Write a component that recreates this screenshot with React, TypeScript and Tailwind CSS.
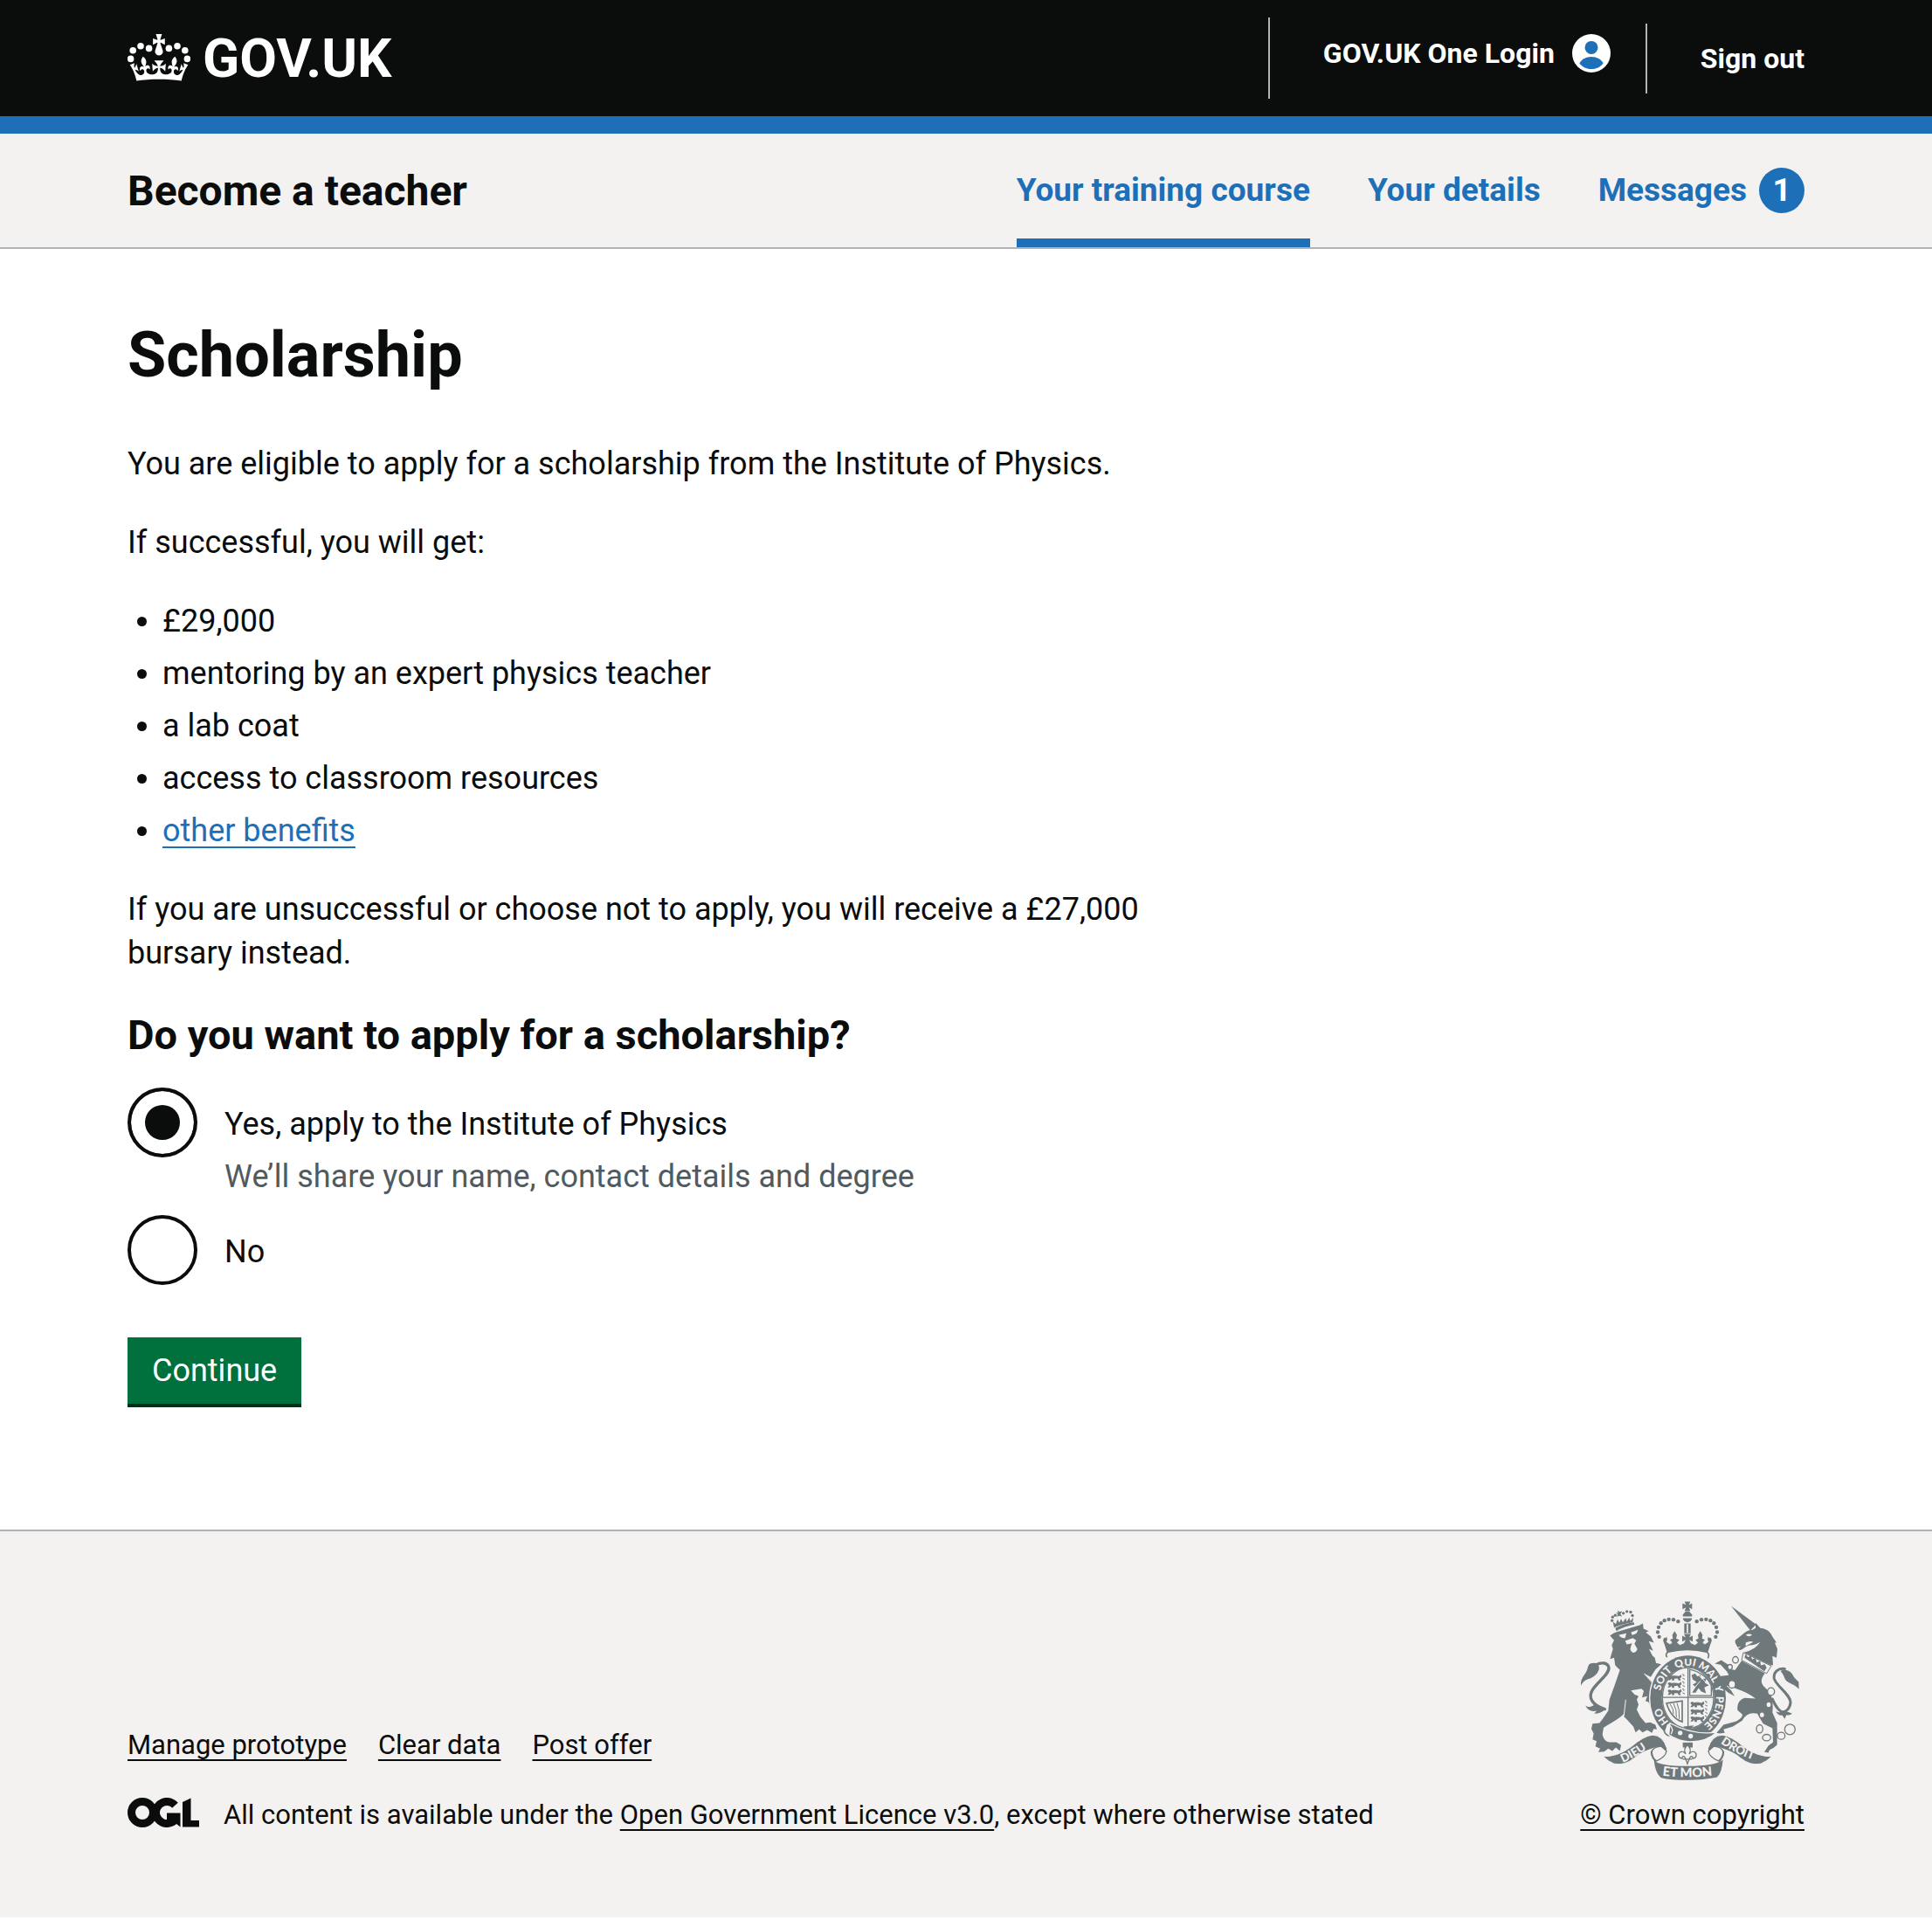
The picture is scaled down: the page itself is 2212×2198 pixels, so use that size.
import { useState, type ReactNode } from "react";

function CrownIcon() {
  const beads = [
    [1.8, 18.2],
    [3.1, 13.4],
    [7.5, 10.9],
    [12.3, 12.2],
  ];
  return (
    <svg viewBox="0 4 36 27" className="mb-0.5 h-[54px] w-[72px]" fill="currentColor" aria-hidden="true">
      {beads.map(([x, y]) => (
        <g key={x}>
          <circle cx={x} cy={y} r="1.9" />
          <circle cx={36 - x} cy={y} r="1.9" />
        </g>
      ))}
      <path
        transform="translate(1.52 4) scale(.52)"
        d="M33.1 9.8c.2-.1.3-.3.5-.5l4.6 2.4v-6.8l-4.6 1.5c-.1-.2-.3-.3-.5-.5L35 0h-6.7l1.9 5.9c-.2.1-.3.3-.5.5l-4.6-1.5v6.8l4.6-2.4c.1.2.3.3.5.5l-2.6 8c-.9 2.8 1.2 5.7 4.1 5.7 3 0 5.1-2.9 4.1-5.7z"
      />
      <path
        transform="translate(1.36 -.7) scale(.524)"
        d="M37 37.9s-3.4 3.8-4.1 6.1c2.2 0 4.2-.5 6.4-2.8l-.7 8.5c-2-2.8-4.4-4.1-5.7-3.8.1 3.1.5 6.7 5.8 7.2 3.7.3 6.7-1.5 7-3.8.4-2.6-2-4.3-3.7-1.6-1.4-4.5 2.4-6.1 4.9-3.2-1.9-4.5-1.8-7.7 2.4-10.9 3 4 2.6 7.3-1.2 11.1 2.4-1.3 6.2 0 4 4.6-1.2-2.8-3.7-2.2-4.2.2-.3 1.7.7 3.7 3 4.2 1.9.3 4.7-.9 7-5.9-1.3 0-2.4.7-3.9 1.7l2.4-8c.6 2.3 1.4 3.7 2.2 4.5.6-1.6.5-2.8 0-5.3l5 1.8c-2.6 3.6-5.2 8.7-7.3 17.5-7.4-1.1-15.7-1.7-24.5-1.7-8.8 0-17.1.6-24.5 1.7-2.1-8.9-4.7-13.9-7.3-17.5l5-1.8c-.5 2.5-.6 3.7 0 5.3.8-.8 1.6-2.3 2.2-4.5l2.4 8c-1.5-1-2.6-1.7-3.9-1.7 2.3 5 5.2 6.2 7 5.9 2.3-.4 3.3-2.4 3-4.2-.5-2.4-3-3.1-4.2-.2-2.2-4.6 1.6-6 4-4.6-3.7-3.7-4.2-7.1-1.2-11.1 4.2 3.2 4.3 6.4 2.4 10.9 2.5-2.8 6.3-1.3 4.9 3.2-1.8-2.7-4.1-1-3.7 1.6.3 2.3 3.3 4.1 7 3.8 5.4-.5 5.7-4.2 5.8-7.2-1.3-.2-3.7 1-5.7 3.8l-.7-8.5c2.2 2.3 4.2 2.7 6.4 2.8-.7-2.3-4.1-6.1-4.1-6.1z"
      />
    </svg>
  );
}

function UserIcon() {
  return (
    <svg viewBox="0 0 44 44" className="size-[44px] shrink-0" aria-hidden="true">
      <circle cx="22" cy="22" r="22" fill="#fff" />
      <circle cx="22" cy="15.4" r="7.5" fill="#1d70b8" />
      <path d="M8.4 33.4C10.6 29 15.8 26 22 26s11.4 3 13.6 7.4C32.4 37.6 27.5 40 22 40S11.6 37.6 8.4 33.4z" fill="#1d70b8" />
    </svg>
  );
}

function OglLogo() {
  return (
    <svg viewBox="0 0 82 34" className="h-[34px] w-[82px] shrink-0" fill="#0b0c0c" role="img" aria-label="Open Government Licence">
      <circle cx="17" cy="17" r="12.5" fill="none" stroke="#0b0c0c" strokeWidth="9" />
      <circle cx="45" cy="17" r="12.5" fill="none" stroke="#0b0c0c" strokeWidth="9" strokeDasharray="63.5 15.04" transform="rotate(26 45 17)" />
      <path d="M45 17.5h15.5V33.5L56 30l-5-5h-6z" />
      <path d="M63 5l9.5-4.5V26H82v7.5H63z" />
    </svg>
  );
}

function Lions({ x, y }: { x: number; y: number }) {
  return (
    <g transform={`translate(${x} ${y})`}>
      {[0, 25, 50].map((dy) => (
        <g key={dy} transform={`translate(0 ${dy})`}>
          <path d="M2 8c4-6 10-5 13-2 8-1 18-2 25 1l8-5 2 8-6 5 4 7h-8l-4-7-12 1 1 6h-8l-1-7-6 6H2l5-7z" />
          <path d="M52 2c5-3 8 2 5 6M53 14l8 4" fill="none" stroke="currentColor" strokeWidth="3" />
        </g>
      ))}
    </g>
  );
}

function RoyalArms({ className }: { className: string }) {
  const arch = [
    [380, 229],
    [359, 220],
    [354, 204],
    [357, 187],
    [365, 173],
    [377, 164],
    [392, 160],
    [408, 161],
    [424, 167],
  ];
  const bg = "#f3f2f1";
  return (
    <svg viewBox="90 98 750 614" className={`text-[#6f787b] ${className}`} fill="currentColor" role="img" aria-label="Royal coat of arms">
      <defs>
        <path id="garter" d="M458 541A97 111 0 0 1 458 319A97 111 0 0 1 458 541" />
        <path id="dieu" d="M234 652Q282 632 336 590" />
        <path id="droit" d="M570 585Q622 624 704 650" />
        <path id="mon" d="M370 696Q456 708 552 695" />
      </defs>

      {/* lion's tail */}
      <path
        d="M172 468C132 456 112 430 130 402C148 374 188 348 186 326C183 308 160 306 142 316"
        fill="none"
        stroke="currentColor"
        strokeWidth="10"
        strokeLinecap="round"
      />
      <path d="M90 388C88 366 98 356 106 344C116 330 112 318 122 312C136 306 156 310 152 332C146 352 126 362 112 366C102 370 94 378 90 388zM106 456C116 464 128 460 136 454L172 470C158 484 146 482 136 484L144 474C128 478 112 472 106 456z" />

      {/* lion */}
      <path d="M213 203L292 180L303 174L305 192L323 200L313 205L330 219L341 240L323 235L338 268L324 262L336 285L344 292L348 310L366 314L346 332L330 358L306 346L340 380L352 404L364 454L352 444L350 458L338 452L330 460L322 444L312 440L318 424L300 428L306 406L298 398L262 404L274 418L288 424L282 436L288 452L282 470L294 494L312 516L328 514L346 522L351 538L340 536L334 550L318 540L302 548L290 538L278 548L270 528L246 502L238 494L240 482C218 506 186 518 168 532L164 556C168 572 178 584 192 582L212 582L228 592L224 612L210 600L198 612L184 604L170 614L150 616L156 604L140 596L144 578L130 572L134 552L126 536L130 518L154 516L166 500L184 474L188 436L206 386L224 334L208 318L204 292L190 296L200 262L196 248L204 232L190 216L202 208z" />
      <path d="M244 436L238 490" stroke={bg} strokeWidth="3" />
      <g fill={bg}>
        <path d="M220 214L246 208L242 224Q228 226 220 214zM262 205L286 196Q284 212 266 214z" />
        <path d="M242 234L268 224L280 232L274 244L284 262Q280 276 268 274Q256 268 262 252L266 242L248 246z" />
      </g>
      <path d="M308 346L340 384" stroke={bg} strokeWidth="3" />

      {/* lion's crown */}
      <path d="M208 190Q236 174 272 170L274 178Q240 184 212 200z" />
      <path d="M204 188L200 168L210 176L216 160L222 172L228 158L234 170L244 156L248 168L256 154L260 166L270 154L268 170Q234 174 204 188zM216 128L222 134L232 132L226 142L232 150L220 148L214 152L216 142L210 136L218 138z" />
      {[[197, 164], [199, 152], [208, 146], [236, 139], [248, 133], [261, 135], [267, 147]].map(([x, y]) => (
        <circle key={x} cx={x} cy={y} r="5" />
      ))}

      {/* imperial crown */}
      {arch.map(([x, y]) => (
        <g key={x}>
          <circle cx={x} cy={y} r="6.5" />
          <circle cx={912 - x} cy={y} r="6.5" />
        </g>
      ))}
      <path d="M446 99H466L461 110L472 105V125L461 119L466 131H446L451 119L439 125V105L451 110zM450 133H462L472 144V150H440V144zM440 156H472Q470 168 456 170Q442 168 440 156zM445 174H467V208H445z" />
      <path d="M456 176V206" stroke={bg} strokeWidth="5" />
      <path d="M378 248L372 232L386 220L384 238L396 246L404 240L396 230L406 226L404 214L412 200L420 214L417 226L428 230L420 240L430 248L444 242L450 230L438 236V216L450 222L444 210H468L462 222L474 216V236L462 230L468 242L482 248L492 240L484 230L494 226L492 214L500 200L508 214L506 226L516 230L508 240L516 246L528 238L526 220L540 232L534 248L526 274Q456 258 386 274z" />
      <path d="M386 290Q378 278 390 272Q456 256 522 272Q534 278 526 294" fill={bg} stroke="currentColor" strokeWidth="5" />

      {/* garter and shield */}
      <ellipse cx="458" cy="431" rx="134" ry="150" fill={bg} />
      <ellipse cx="458" cy="431" rx="130" ry="147" />
      <ellipse cx="458" cy="430" rx="90" ry="106" fill={bg} />
      <ellipse cx="458" cy="430" rx="88" ry="104" fill="none" stroke="currentColor" strokeWidth="4" />
      <g fill={bg} className="font-['Lato'] text-[36px] font-black">
        <text><textPath href="#garter" startOffset="74">HO</textPath></text>
        <text><textPath href="#garter" startOffset="188">SOIT</textPath></text>
        <text><textPath href="#garter" startOffset="284">QUI</textPath></text>
        <text><textPath href="#garter" startOffset="360">MAL</textPath></text>
        <text><textPath href="#garter" startOffset="448">Y</textPath></text>
        <text><textPath href="#garter" startOffset="484">PENSE</textPath></text>
      </g>
      <path d="M372 428H546M458 326V534" stroke="currentColor" strokeWidth="4" />
      <path d="M464 332V422H538V388Q520 346 464 332z" fill="none" stroke="currentColor" strokeWidth="4" />
      <path d="M470 352L482 346L490 356L500 350L504 366L522 362L516 378L530 386L514 394L520 414L504 408L494 396L484 412H472L484 392L474 384L488 376L474 366z" />
      <path d="M494 352L524 380M476 400L500 372" stroke={bg} strokeWidth="3" />
      <Lions x={386} y={348} />
      <Lions x={464} y={440} />
      <path d="M384 448L438 440V512Q400 500 384 448z" fill="none" stroke="currentColor" strokeWidth="5" />
      <path d="M396 450Q410 468 408 486M408 448Q420 470 418 496M420 447Q430 470 428 502" fill="none" stroke="currentColor" strokeWidth="3" />
      {/* garter buckle */}
      <path d="M384 520Q400 506 414 524L404 556Q384 566 376 544z" fill={bg} stroke="currentColor" strokeWidth="5" />
      <path d="M396 516Q470 558 556 548Q520 582 460 580Q420 576 392 556z" stroke={bg} strokeWidth="4" />
      <path d="M396 524Q410 536 400 554" fill="none" stroke={bg} strokeWidth="4" />
      <path d="M442 528L478 524L466 538L450 536z" />
      <circle cx="431" cy="550" r="8" fill={bg} />
      <circle cx="467" cy="561" r="8" fill={bg} />

      {/* unicorn's tail */}
      <path
        d="M790 330C768 326 750 342 754 364C762 390 812 420 810 446C808 468 794 478 780 478C764 470 756 452 748 434"
        fill="none"
        stroke="currentColor"
        strokeWidth="9"
        strokeLinecap="round"
      />
      <path d="M776 338C786 330 808 334 816 348C822 360 828 366 838 374L839 400C828 386 812 382 800 374C788 368 790 352 776 338zM760 476Q780 484 792 474L816 484Q806 492 796 488L790 502L782 490Q766 490 760 476z" />

      {/* unicorn */}
      <path d="M606 114L692 178L672 198z" />
      <path d="M680 196L690 190V172L706 190C734 194 742 206 748 220L762 240L756 240L765 262L762 292L748 286L750 318L738 316L650 274Q690 264 706 238Q694 246 680 248Q658 248 646 262L636 266L630 260L640 252L628 256L620 240V232L650 208Q664 196 680 196z" />
      <path d="M656 214Q668 206 678 214Q668 222 656 214zM656 240Q672 232 682 238L656 252z" fill={bg} />
      <path d="M648 274L744 320L728 346L642 300z" fill={bg} stroke="currentColor" strokeWidth="3" />
      <path d="M652 292L656 278L664 290L674 284L678 298L690 292L694 308L706 302L708 318L722 314L728 326L720 338z" />
      <path d="M642 302L722 346Q702 370 716 388L740 412Q752 440 748 480L764 516V590Q752 604 738 608L734 618L720 616L734 594L750 582L748 534L716 518L696 484Q660 476 644 508L612 528L580 538L584 550L566 552L556 550L580 522L624 510Q648 496 644 486L628 472Q624 440 652 430L690 432Q660 410 628 400L604 390L590 388L606 404L618 424L596 412L566 386L558 356L598 352L592 340L570 316L550 312L572 300L596 316L606 332L620 334z" />
      <g fill={bg} stroke="currentColor" strokeWidth="4">
        <ellipse cx="621" cy="299" rx="10" ry="11" />
        <ellipse cx="602" cy="324" rx="8" ry="9" />
        <ellipse cx="609" cy="383" rx="12" ry="13" />
        <ellipse cx="743" cy="408" rx="12" ry="13" />
        <ellipse cx="735" cy="453" rx="9" ry="10" />
        <ellipse cx="712" cy="488" rx="9" ry="10" />
        <ellipse cx="704" cy="536" rx="11" ry="14" />
        <ellipse cx="728" cy="566" rx="14" ry="11" />
        <ellipse cx="778" cy="560" rx="13" ry="12" />
        <ellipse cx="808" cy="538" rx="18" ry="18" />
      </g>

      {/* motto scroll */}
      <path d="M166 631Q216 632 262 598Q306 560 336 557Q372 558 386 604Q386 620 366 636Q348 644 348 654Q328 636 328 616Q332 600 358 598Q300 612 274 636Q240 664 204 656Q184 648 166 631z" stroke={bg} strokeWidth="3" />
      <path d="M746 631Q696 632 650 598Q606 560 576 557Q540 558 526 604Q526 620 546 636Q564 644 564 654Q584 636 584 616Q580 600 554 598Q612 612 638 636Q672 664 708 656Q728 648 746 631z" stroke={bg} strokeWidth="3" />
      <path d="M366 596Q334 598 334 618Q336 636 350 646Q382 632 384 612zM546 596Q578 598 578 618Q576 636 562 646Q530 632 528 612z" fill={bg} stroke="currentColor" strokeWidth="4" />
      <path d="M341 644Q360 664 456 664Q552 664 578 642Q574 690 556 703Q510 712 456 712Q396 712 366 704Q346 690 341 644z" />
      <g fill={bg} className="font-['Lato'] text-[40px] font-black">
        <text><textPath href="#dieu">DIEU</textPath></text>
        <text><textPath href="#droit">DROIT</textPath></text>
      </g>
      <text fill={bg} className="font-['Lato'] text-[44px] font-black">
        <textPath href="#mon">ET MON</textPath>
      </text>

      {/* badge below the shield */}
      <path d="M440 583H474V600H440z" />
      <path d="M456 592Q440 606 450 622Q434 606 426 622Q424 636 438 638Q436 628 446 632L450 640L456 656L462 640L466 632Q476 628 474 638Q488 636 486 622Q478 606 462 622Q472 606 456 592zM440 640H472" fill={bg} stroke="currentColor" strokeWidth="4" />
    </svg>
  );
}

const linkLine = "underline decoration-2 underline-offset-[6px] [text-decoration-skip-ink:none]";

function Container({ className, children }: { className: string; children: ReactNode }) {
  return <div className={`mx-auto max-w-[1920px] ${className}`}>{children}</div>;
}

function Header() {
  return (
    <header className="border-b-[20px] border-[#1d70b8] bg-[#0b0c0c] font-bold text-white">
      <Container className="flex h-[133px] items-center justify-between">
        <a href="#" className="flex items-center gap-[14px]">
          <CrownIcon />
          <span className="text-[62px] leading-[60px]">GOV.UK</span>
        </a>
        <div className="flex items-center text-[32px] leading-[40px]">
          <a href="#" className="flex h-[93px] items-center gap-5 border-l-2 border-[#b1b4b6] pr-10 pb-3 pl-[61px]">
            GOV.UK One Login
            <UserIcon />
          </a>
          <a href="#" className="flex h-20 items-center border-l-2 border-[#b1b4b6] pl-[61px]">
            Sign out
          </a>
        </div>
      </Container>
    </header>
  );
}

function ServiceNavigation() {
  return (
    <div className="border-b-2 border-[#b1b4b6] bg-[#f3f2f1] font-bold">
      <Container className="flex h-[130px] items-stretch justify-between">
        <a href="#" className="flex items-center pt-0.5 text-[48px] leading-[60px]">
          Become a teacher
        </a>
        <nav className="flex gap-[66px] text-[37px] leading-[50px] text-[#1d70b8]">
          <a href="#" aria-current="page" className="flex items-center border-b-[10px] border-[#1d70b8] pt-[10px]">
            Your training course
          </a>
          <a href="#" className="flex items-center">
            Your details
          </a>
          <a href="#" className="flex items-center gap-[14px]">
            Messages
            <span className="flex size-[52px] items-center justify-center rounded-full bg-[#1d70b8] text-white">1</span>
          </a>
        </nav>
      </Container>
    </div>
  );
}

function Radio(props: { id: string; label: string; hint?: string; checked: boolean; onSelect: () => void }) {
  return (
    <div className="flex gap-[31px]">
      <input
        type="radio"
        name="scholarship"
        id={props.id}
        checked={props.checked}
        onChange={props.onSelect}
        aria-describedby={props.hint ? `${props.id}-hint` : undefined}
        className="size-20 shrink-0 appearance-none rounded-full border-4 border-[#0b0c0c] bg-white checked:bg-[#0b0c0c] checked:shadow-[inset_0_0_0_16px_#fff]"
      />
      <div className="flex flex-col gap-[10px] pt-[17px]">
        <label htmlFor={props.id}>{props.label}</label>
        {props.hint && (
          <p id={`${props.id}-hint`} className="text-[#505a5f]">
            {props.hint}
          </p>
        )}
      </div>
    </div>
  );
}

function ScholarshipForm() {
  const [choice, setChoice] = useState("yes");
  return (
    <form className="mt-[39px]" onSubmit={(e) => e.preventDefault()}>
      <fieldset>
        <legend className="mb-[30px] text-[47px] leading-[60px] font-bold">Do you want to apply for a scholarship?</legend>
        <div className="flex flex-col gap-[19px]">
          <Radio
            id="yes"
            label="Yes, apply to the Institute of Physics"
            hint="We’ll share your name, contact details and degree"
            checked={choice === "yes"}
            onSelect={() => setChoice("yes")}
          />
          <Radio id="no" label="No" checked={choice === "no"} onSelect={() => setChoice("no")} />
        </div>
      </fieldset>
      <button type="submit" className="mt-[60px] h-20 border-b-4 border-[#002d18] bg-[#00703c] px-7 text-white">
        Continue
      </button>
    </form>
  );
}

function Footer() {
  return (
    <footer className="border-t-2 border-[#b1b4b6] bg-[#f3f2f1] text-[31px] leading-[40px]">
      <Container className="flex items-end justify-between pt-20 pb-[97px]">
        <div className="flex flex-col gap-10">
          <ul className="flex gap-9">
            {["Manage prototype", "Clear data", "Post offer"].map((t) => (
              <li key={t}>
                <a href="#" className={linkLine}>
                  {t}
                </a>
              </li>
            ))}
          </ul>
          <div className="flex gap-7">
            <OglLogo />
            <p>
              All content is available under the{" "}
              <a href="#" className={linkLine}>
                Open Government Licence v3.0
              </a>
              , except where otherwise stated
            </p>
          </div>
        </div>
        <div className="flex flex-col items-end gap-5">
          <RoyalArms className="mr-1.5 h-[205px] w-[250px]" />
          <a href="#" className={linkLine}>
            © Crown copyright
          </a>
        </div>
      </Container>
    </footer>
  );
}

export default function App() {
  return (
    <div className="bg-white font-['Roboto',sans-serif] text-[36px] leading-[50px] text-[#0b0c0c]">
      <Header />
      <ServiceNavigation />
      <Container className="pt-[82px] pb-[140px]">
        <main className="max-w-[1250px]">
          <h1 className="mb-[59px] text-[72px] leading-[80px] font-bold">Scholarship</h1>
          <p className="mb-10">You are eligible to apply for a scholarship from the Institute of Physics.</p>
          <p className="mb-10">If successful, you will get:</p>
          <ul className="mb-10 flex list-disc flex-col gap-[10px] pl-10">
            <li>£29,000</li>
            <li>mentoring by an expert physics teacher</li>
            <li>a lab coat</li>
            <li>access to classroom resources</li>
            <li>
              <a href="#" className={`text-[#1d70b8] ${linkLine}`}>
                other benefits
              </a>
            </li>
          </ul>
          <p>If you are unsuccessful or choose not to apply, you will receive a £27,000 bursary instead.</p>
          <ScholarshipForm />
        </main>
      </Container>
      <Footer />
    </div>
  );
}
